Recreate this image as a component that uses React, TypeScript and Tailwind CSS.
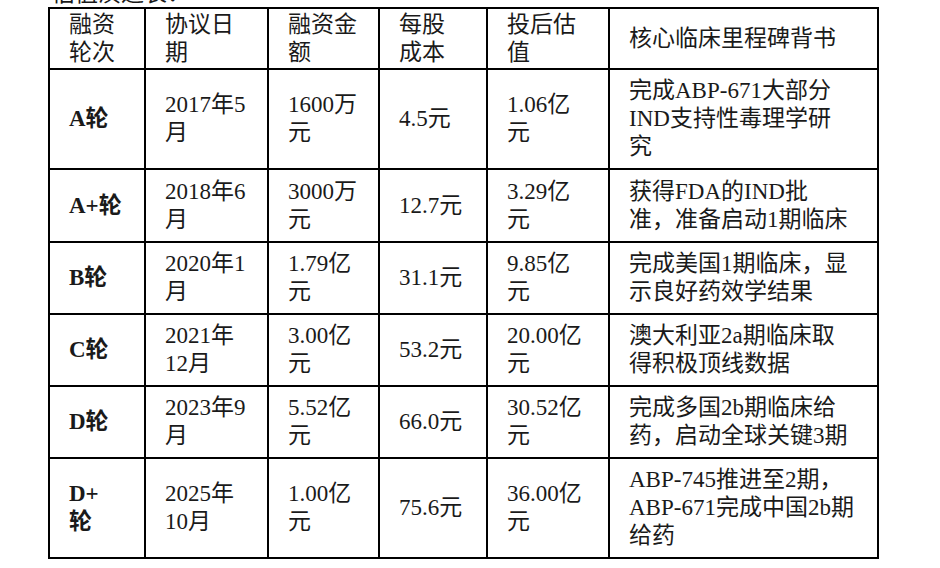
const rows = [
  { round: ["A轮"], date: ["2017年5", "月"], amount: ["1600万", "元"], cost: ["4.5元"], value: ["1.06亿", "元"], note: ["完成ABP-671大部分", "IND支持性毒理学研", "究"], h: "h-[100px]" },
  { round: ["A+轮"], date: ["2018年6", "月"], amount: ["3000万", "元"], cost: ["12.7元"], value: ["3.29亿", "元"], note: ["获得FDA的IND批", "准，准备启动1期临床"], h: "h-[73px]" },
  { round: ["B轮"], date: ["2020年1", "月"], amount: ["1.79亿", "元"], cost: ["31.1元"], value: ["9.85亿", "元"], note: ["完成美国1期临床，显", "示良好药效学结果"], h: "h-[72px]" },
  { round: ["C轮"], date: ["2021年", "12月"], amount: ["3.00亿", "元"], cost: ["53.2元"], value: ["20.00亿", "元"], note: ["澳大利亚2a期临床取", "得积极顶线数据"], h: "h-[72px]" },
  { round: ["D轮"], date: ["2023年9", "月"], amount: ["5.52亿", "元"], cost: ["66.0元"], value: ["30.52亿", "元"], note: ["完成多国2b期临床给", "药，启动全球关键3期"], h: "h-[72px]" },
  { round: ["D+", "轮"], date: ["2025年", "10月"], amount: ["1.00亿", "元"], cost: ["75.6元"], value: ["36.00亿", "元"], note: ["ABP-745推进至2期，", "ABP-671完成中国2b期", "给药"], h: "h-[100px]" },
];

const headers = [["融资", "轮次"], ["协议日", "期"], ["融资金", "额"], ["每股", "成本"], ["投后估", "值"], ["核心临床里程碑背书"]];

const cell = "border-2 border-black align-middle pl-[19px] pr-1 py-0 text-left";

function Lines({ lines }: { lines: string[] }) {
  return (
    <>
      {lines.map((l, i) => (
        <div key={i} className="whitespace-nowrap">{l}</div>
      ))}
    </>
  );
}

export default function App() {
  return (
    <div
      className="w-[940px] h-[568px] overflow-hidden bg-white text-[#1a1a1a] pl-[48px] text-[23px] leading-[28px]"
      style={{ fontFamily: '"Liberation Serif", "Noto Sans CJK SC", serif' }}
    >
      <div className="-mt-[20px] pl-[4px] h-[28px]">估值演进表：</div>
      <table className="table-fixed border-collapse w-[829px] mt-[-1px]">
        <colgroup>
          <col className="w-[96px]" />
          <col className="w-[123px]" />
          <col className="w-[111px]" />
          <col className="w-[108px]" />
          <col className="w-[122px]" />
          <col className="w-[269px]" />
        </colgroup>
        <thead>
          <tr className="h-[61px]">
            {headers.map((h, i) => (
              <th key={i} className={`${cell} font-normal`}>
                <Lines lines={h} />
              </th>
            ))}
          </tr>
        </thead>
        <tbody>
          {rows.map((r, i) => (
            <tr key={i} className={r.h}>
              <td className={`${cell} font-bold`}><Lines lines={r.round} /></td>
              <td className={cell}><Lines lines={r.date} /></td>
              <td className={cell}><Lines lines={r.amount} /></td>
              <td className={cell}><Lines lines={r.cost} /></td>
              <td className={cell}><Lines lines={r.value} /></td>
              <td className={cell}><Lines lines={r.note} /></td>
            </tr>
          ))}
        </tbody>
      </table>
    </div>
  );
}
